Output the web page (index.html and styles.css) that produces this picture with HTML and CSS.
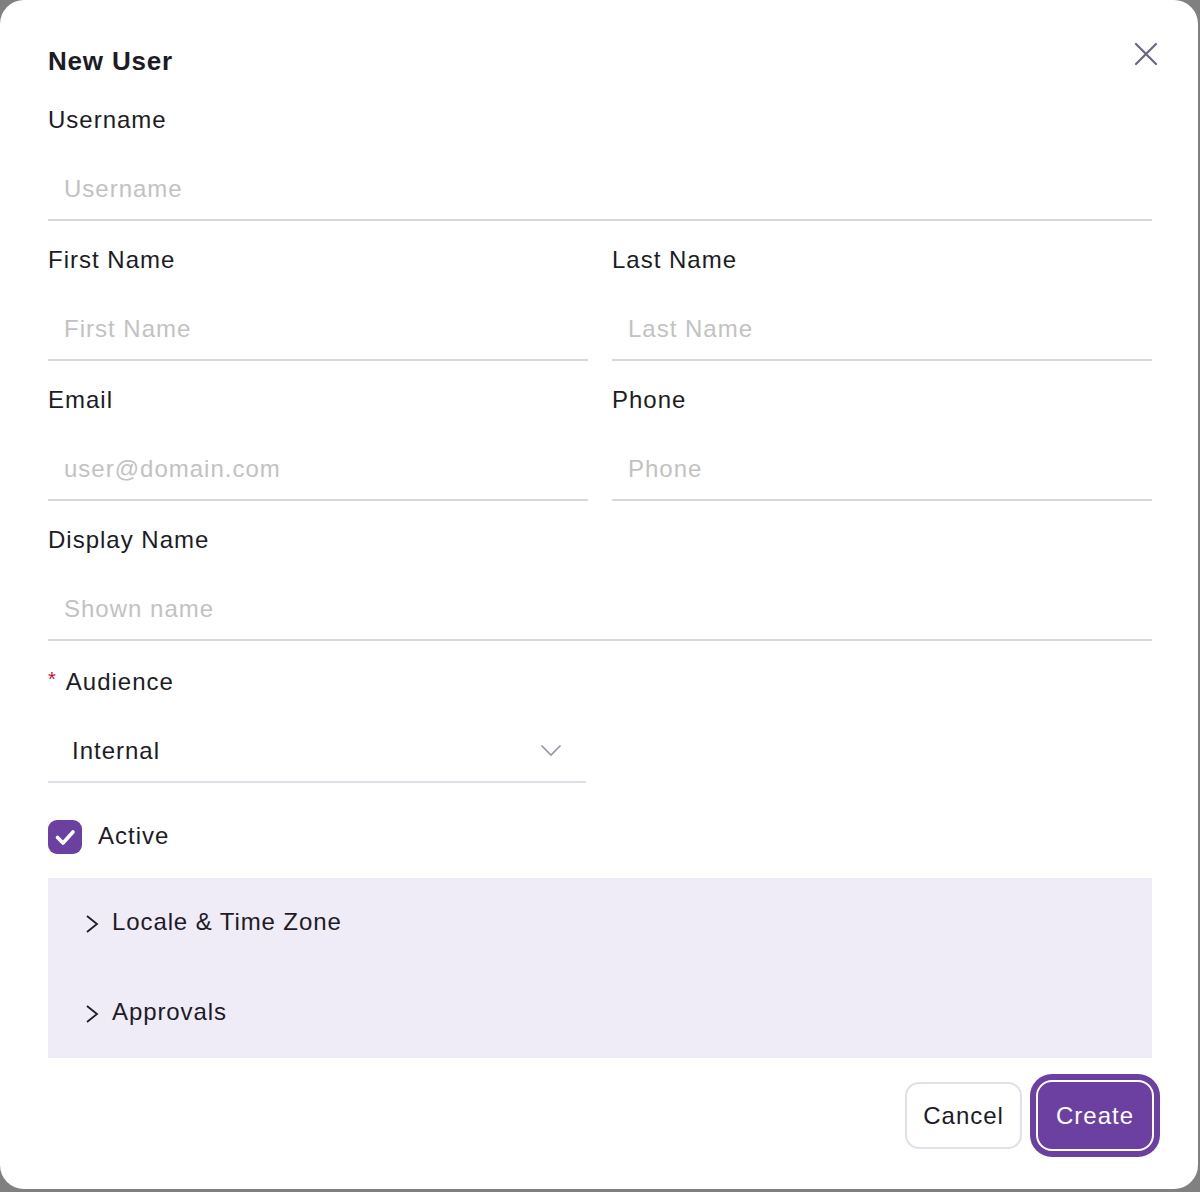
FILE: index.html
```html
<!DOCTYPE html>
<html lang="en">
<head>
<meta charset="utf-8">
<title>New User</title>
<link rel="stylesheet" href="styles.css">
</head>
<body>
<div class="dialog">
  <div class="header">
    <h2 class="title">New User</h2>
  </div>
  <button class="close" type="button" aria-label="Close">
    <svg width="24" height="24" viewBox="0 0 24 24"><path d="M2 2 L22 22 M22 2 L2 22" stroke="#6b6580" stroke-width="2.2" stroke-linecap="round" fill="none"/></svg>
  </button>
  <form class="form">
    <div class="field">
      <label class="label">Username</label>
      <input class="input" placeholder="Username">
    </div>
    <div class="row">
      <div class="field">
        <label class="label">First Name</label>
        <input class="input" placeholder="First Name">
      </div>
      <div class="field">
        <label class="label">Last Name</label>
        <input class="input" placeholder="Last Name">
      </div>
    </div>
    <div class="row">
      <div class="field">
        <label class="label">Email</label>
        <input class="input" placeholder="user@domain.com">
      </div>
      <div class="field">
        <label class="label">Phone</label>
        <input class="input" placeholder="Phone">
      </div>
    </div>
    <div class="field">
      <label class="label">Display Name</label>
      <input class="input" placeholder="Shown name">
    </div>
    <div class="field audience">
      <label class="label"><span class="req">*</span>Audience</label>
      <div class="select">
        <span class="select-value">Internal</span>
        <svg class="select-chev" width="22" height="13" viewBox="0 0 22 13"><polyline points="1.5,1.5 11,11 20.5,1.5" fill="none" stroke="#9a96a8" stroke-width="1.7"/></svg>
      </div>
    </div>
    <div class="check-row">
      <span class="checkbox"><svg width="34" height="34" viewBox="0 0 34 34"><polyline points="9.5,17.5 15,23 25,12" fill="none" stroke="#fff" stroke-width="3.6" stroke-linecap="round" stroke-linejoin="round"/></svg></span>
      <span class="check-label">Active</span>
    </div>
    <div class="accordion">
      <div class="acc-item">
        <svg class="acc-chev" width="14" height="20" viewBox="0 0 14 20"><polyline points="2,2 12,10 2,18" fill="none" stroke="#1d1b26" stroke-width="1.8"/></svg>
        <span class="acc-title">Locale &amp; Time Zone</span>
      </div>
      <div class="acc-item">
        <svg class="acc-chev" width="14" height="20" viewBox="0 0 14 20"><polyline points="2,2 12,10 2,18" fill="none" stroke="#1d1b26" stroke-width="1.8"/></svg>
        <span class="acc-title">Approvals</span>
      </div>
    </div>
    <div class="footer">
      <button class="btn btn-secondary" type="button">Cancel</button>
      <button class="btn btn-primary" type="button">Create</button>
    </div>
  </form>
</div>
</body>
</html>
```

FILE: styles.css
```css
* { box-sizing: border-box; }

html, body {
  margin: 0;
  padding: 0;
  background: #808080;
  font-family: "Liberation Sans", Arial, sans-serif;
  color: #1d1b26;
}

.dialog {
  position: relative;
  width: 1198px;
  background: #ffffff;
  border-radius: 24px;
  padding: 40px 46px 40px 48px;
}

.header {
  height: 40px;
  display: flex;
  align-items: center;
  margin-bottom: 23px;
}

.title {
  margin: 0;
  font-size: 26px;
  font-weight: 700;
  line-height: 40px;
  letter-spacing: 0.8px;
  color: #1d1b26;
  position: relative;
  top: 1px;
}

.close {
  position: absolute;
  top: 34px;
  right: 32px;
  width: 40px;
  height: 40px;
  border: 0;
  padding: 0;
  background: transparent;
  display: flex;
  align-items: center;
  justify-content: center;
}

.form {
  display: flex;
  flex-direction: column;
  gap: 22px;
}

.row {
  display: grid;
  grid-template-columns: 1fr 1fr;
  column-gap: 24px;
}

.field {
  display: flex;
  flex-direction: column;
}

.label {
  height: 32px;
  line-height: 34px;
  font-size: 24px;
  letter-spacing: 1px;
  margin-bottom: 22px;
  color: #1d1b26;
}

.input {
  height: 64px;
  border: 0;
  border-bottom: 2px solid #d9d9d9;
  padding: 2px 16px 0;
  font-family: inherit;
  font-size: 24px;
  letter-spacing: 1px;
  color: #1d1b26;
  background: transparent;
  outline: none;
}

.input::placeholder {
  color: #c2c2c2;
}

.audience {
  margin-top: 2px;
  width: 538px;
}

.req {
  color: #c8102e;
  font-size: 20px;
  margin-right: 9px;
  position: relative;
  top: -4px;
}

.select {
  height: 64px;
  border-bottom: 2px solid #e1deea;
  display: flex;
  align-items: center;
  justify-content: space-between;
  padding: 2px 24px 0 24px;
}

.select-value {
  font-size: 24px;
  letter-spacing: 1px;
  color: #1d1b26;
}

.select-chev {
  position: relative;
  top: -1px;
}

.check-row {
  margin-top: 15px;
  display: flex;
  align-items: center;
  gap: 16px;
}

.checkbox {
  width: 34px;
  height: 34px;
  border-radius: 9px;
  background: #6b40a0;
  display: flex;
}

.check-label {
  font-size: 24px;
  letter-spacing: 1px;
  position: relative;
  top: -1px;
}

.accordion {
  margin-top: 2px;
  background: #efecf7;
  display: flex;
  flex-direction: column;
}

.acc-item {
  height: 90px;
  display: flex;
  align-items: center;
  padding: 0 0 4px 37px;
  gap: 13px;
}

.acc-chev {
  position: relative;
  top: 3px;
}

.acc-title {
  font-size: 24px;
  letter-spacing: 0.9px;
  position: relative;
  top: 1px;
}

.footer {
  display: flex;
  justify-content: flex-end;
  gap: 16px;
  margin-top: 2px;
}

.btn {
  height: 67px;
  padding: 0 16px;
  border-radius: 14px;
  font-family: inherit;
  font-size: 24px;
  letter-spacing: 1px;
}

.btn-secondary {
  background: #ffffff;
  border: 2px solid #e2dfea;
  color: #1d1b26;
}

.btn-primary {
  background: #6b40a0;
  border: 2px solid #6b40a0;
  color: #ffffff;
  box-shadow: 0 0 0 2px #ffffff, 0 0 0 8px #6b40a0;
}
```
